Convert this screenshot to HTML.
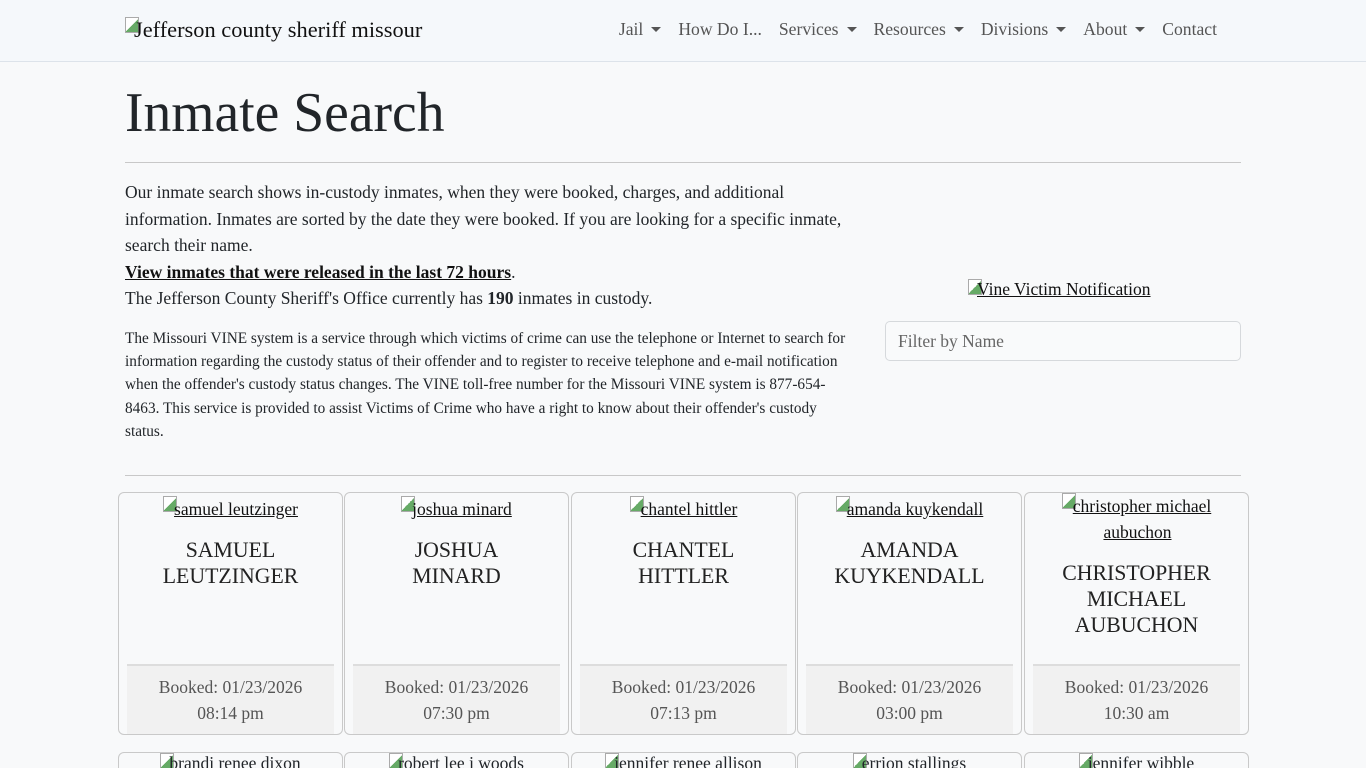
<!DOCTYPE html>
<html><head><style>
*{box-sizing:border-box}
html,body{margin:0;height:768px;overflow:hidden}
body{background:#f8f9fa;font-family:"Liberation Serif",serif;color:#212529;width:1366px;position:relative}
.nav{height:62px;background:#f5f8fb;border-bottom:1px solid #dde3ea;position:relative}
.brand{position:absolute;left:125px;top:17px;font-size:22.4px;color:#111}
.ic{display:inline-block;width:14px;height:16px;border:1px solid #aaa;vertical-align:top;margin-right:-5px;background:linear-gradient(135deg,#fff 50%,#6a6 50%)}
.menu{position:absolute;right:149px;top:19px;font-size:17.6px;color:#555;display:flex;gap:17px}
.menu span .c{display:inline-block;border-left:5px solid transparent;border-right:5px solid transparent;border-top:5px solid #555;margin-left:8px;vertical-align:3px}
h1{position:absolute;left:125px;top:84px;margin:0;font-weight:400;font-size:55.6px;line-height:58px}
hr{position:absolute;left:125px;width:1116px;margin:0;border:0;border-top:1px solid #c8c8c8}
.p1{position:absolute;left:125px;top:179px;width:730px;font-size:17.5px;line-height:26.5px}
.p1 a{color:#111;font-weight:bold}
.p2{position:absolute;left:125px;top:327px;width:730px;font-size:15.3px;line-height:23.2px}
.vine{position:absolute;left:968px;top:279px;font-size:17.5px;color:#111;text-decoration:underline}
.inp{position:absolute;left:885px;top:321px;width:356px;height:40px;border:1px solid #d6d9dc;border-radius:5px;background:#f9fafb;font-size:17.5px;color:#666;padding:9px 12px}
.card{position:absolute;width:225px;height:243px;border:1px solid #c9c9c9;border-radius:6px;background:#f8f9fa;text-align:center}
.card .im{margin-top:3px;font-size:17.5px;color:#111;line-height:26px}
.card .im u{margin-left:2px}
.card .nm{font-size:21.8px;line-height:26px;margin-top:15px;color:#222}
.card .ft{position:absolute;left:8px;right:8px;bottom:0;height:70px;background:#f1f1f1;border-top:2px solid #ddd;font-size:17.5px;color:#555;line-height:26px;padding-top:8px}
.card2{position:absolute;top:752px;width:225px;height:30px;border:1px solid #c9c9c9;border-radius:6px;text-align:center;font-size:17.5px;line-height:20px}
</style></head><body>
<div class="nav">
<div class="brand"><span class="ic"></span>Jefferson county sheriff missour</div>
<div class="menu"><span>Jail<i class="c"></i></span><span>How Do I...</span><span>Services<i class="c"></i></span><span>Resources<i class="c"></i></span><span>Divisions<i class="c"></i></span><span>About<i class="c"></i></span><span>Contact</span></div>
</div>
<h1>Inmate Search</h1>
<hr style="top:162px">
<div class="p1">Our inmate search shows in-custody inmates, when they were booked, charges, and additional information. Inmates are sorted by the date they were booked. If you are looking for a specific inmate, search their name.<br><a href="#"><u>View inmates that were released in the last 72 hours</u></a>.<br>The Jefferson County Sheriff's Office currently has <b>190</b> inmates in custody.</div>
<div class="p2">The Missouri VINE system is a service through which victims of crime can use the telephone or Internet to search for information regarding the custody status of their offender and to register to receive telephone and e-mail notification when the offender's custody status changes. The VINE toll-free number for the Missouri VINE system is 877-654-8463. This service is provided to assist Victims of Crime who have a right to know about their offender's custody status.</div>
<div class="vine"><span class="ic"></span><u>Vine Victim Notification</u></div>
<div class="inp">Filter by Name</div>
<hr style="top:475px">
<div class="card" style="left:118px;top:492px"><div class="im"><span class="ic"></span><u>samuel leutzinger</u></div><div class="nm">SAMUEL<br>LEUTZINGER</div><div class="ft">Booked: 01/23/2026<br>08:14 pm</div></div>
<div class="card" style="left:344px;top:492px"><div class="im"><span class="ic"></span><u>joshua minard</u></div><div class="nm">JOSHUA<br>MINARD</div><div class="ft">Booked: 01/23/2026<br>07:30 pm</div></div>
<div class="card" style="left:571px;top:492px"><div class="im"><span class="ic"></span><u>chantel hittler</u></div><div class="nm">CHANTEL<br>HITTLER</div><div class="ft">Booked: 01/23/2026<br>07:13 pm</div></div>
<div class="card" style="left:797px;top:492px"><div class="im"><span class="ic"></span><u>amanda kuykendall</u></div><div class="nm">AMANDA<br>KUYKENDALL</div><div class="ft">Booked: 01/23/2026<br>03:00 pm</div></div>
<div class="card" style="left:1024px;top:492px"><div class="im" style="margin-top:0"><span class="ic"></span><u>christopher michael</u><br><u>aubuchon</u></div><div class="nm" style="margin-top:15px">CHRISTOPHER<br>MICHAEL<br>AUBUCHON</div><div class="ft">Booked: 01/23/2026<br>10:30 am</div></div>
<div class="card2" style="left:118px"><span class="ic"></span><u>brandi renee dixon</u></div>
<div class="card2" style="left:344px"><span class="ic"></span><u>robert lee j woods</u></div>
<div class="card2" style="left:571px"><span class="ic"></span><u>jennifer renee allison</u></div>
<div class="card2" style="left:797px"><span class="ic"></span><u>errion stallings</u></div>
<div class="card2" style="left:1024px"><span class="ic"></span><u>jennifer wibble</u></div>
</body></html>
